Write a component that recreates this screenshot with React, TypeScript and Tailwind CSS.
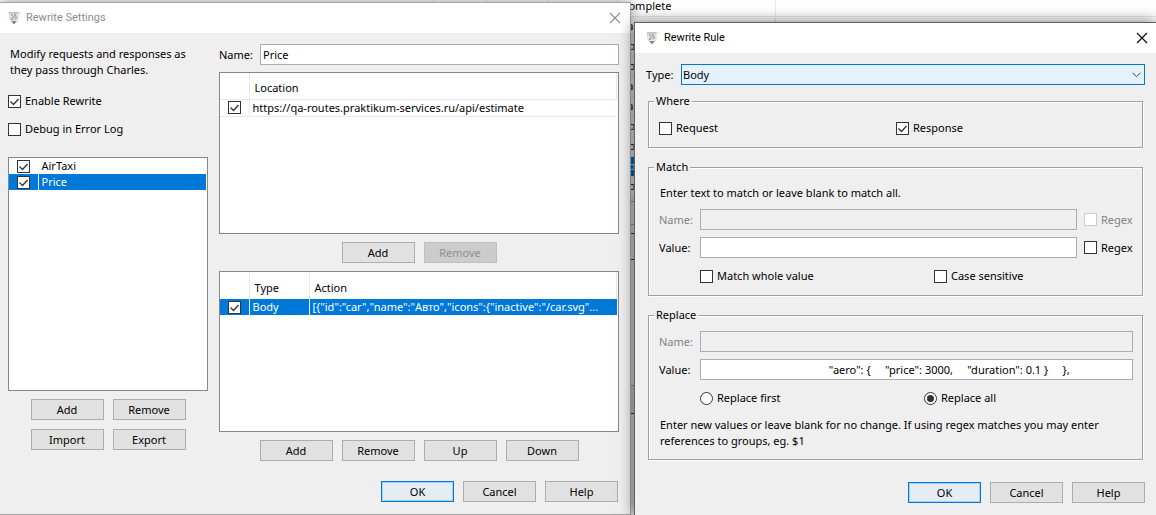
import React, { useId } from "react";

function Jug() {
  return (
    <svg width="14" height="14" viewBox="0 0 14 14" aria-hidden="true" className="shrink-0">
      <path d="M1.500 2h8.500v6.500L8.500 11h-5L2 8.500z" fill="#e6ece9" stroke="#c0c6c3" strokeWidth="0.700" />
      <path d="M0 2.500 1.500 1h9v1.200l-8.500.300z" fill="#bcc2bf" />
      <path d="M10 1.800c1.500-1.200 2.800-.3 2.900 1.700" fill="none" stroke="#d8d8d8" strokeWidth="0.800" />
      <rect x="3" y="3" width="2" height="2" fill="#7fd09a" />
      <rect x="6" y="3" width="2" height="2" fill="#ee7f98" />
      <rect x="4.500" y="5" width="2" height="2" fill="#86aef0" />
      <rect x="7" y="5.500" width="2" height="2" fill="#6cc67c" />
      <rect x="3" y="7" width="2" height="2" fill="#d884c4" />
      <rect x="6" y="7.500" width="1.500" height="1.500" fill="#e8b060" />
      <path d="M3.500 10h5l-1 1.800-1 1.200h-1l-1-1.200z" fill="#85898a" />
    </svg>
  );
}

function TitleBar({ title, active }: { title: string; active?: boolean }) {
  return (
    <header className={"flex h-[30px] items-center justify-between bg-white " + (active ? "pl-[11px] pr-2" : "pl-2 pr-[9px]")}>
      <div className="flex items-center">
        <Jug />
        <h1 className={"pl-1 font-[Roboto,sans-serif] " + (active ? "text-black" : "text-[#8c8c8c]")}>{title}</h1>
      </div>
      <button type="button" aria-label={"Close " + title} className={active ? "text-black" : "text-[#8c8c8c]"}>
        <svg width="12" height="12" viewBox="0 0 12 12" className="block">
          <path d="M1 1l10 10M11 1L1 11" fill="none" stroke="currentColor" strokeWidth="1.100" />
        </svg>
      </button>
    </header>
  );
}

type CheckProps = { label: string; checked?: boolean; disabled?: boolean; hideLabel?: boolean };

function Check({ label, checked, disabled, hideLabel }: CheckProps) {
  return (
    <label className={"flex items-center gap-1 " + (disabled ? "text-[#838383]" : "")}>
      <span className="grid size-[13px] shrink-0">
        <input
          type="checkbox"
          defaultChecked={checked}
          disabled={disabled}
          aria-label={hideLabel ? label : undefined}
          className="peer col-start-1 row-start-1 size-[13px] appearance-none border border-[#333] bg-white disabled:border-[#ccc]"
        />
        <svg viewBox="0 0 13 13" className="pointer-events-none col-start-1 row-start-1 hidden size-[13px] peer-checked:block">
          <path d="M2.500 6.500l3 3 5-5.500" fill="none" stroke="#333" strokeWidth="1.300" />
        </svg>
      </span>
      {!hideLabel && <span>{label}</span>}
    </label>
  );
}

function Radio({ label, checked }: { label: string; checked?: boolean }) {
  return (
    <label className="flex items-center gap-1">
      <span className="grid size-[13px] shrink-0 place-items-center">
        <input
          type="radio"
          name="replace-mode"
          defaultChecked={checked}
          className="peer col-start-1 row-start-1 size-[13px] appearance-none rounded-full border border-[#333] bg-white"
        />
        <span className="pointer-events-none col-start-1 row-start-1 hidden size-[7px] rounded-full bg-[#333] peer-checked:block" />
      </span>
      <span>{label}</span>
    </label>
  );
}

function Button({ children, primary, disabled }: { children: React.ReactNode; primary?: boolean; disabled?: boolean }) {
  const tone = primary
    ? "border-[#0078d7] bg-[#e5ecf4] shadow-[inset_0_0_0_1px_#a6d1f5]"
    : disabled
      ? "border-[#bfbfbf] bg-[#ccc] text-[#909090]"
      : "border-[#adadad] bg-[#e1e1e1]";
  return (
    <button type="button" disabled={disabled} className={"flex h-[21px] w-[73px] items-center justify-center border " + tone}>
      {children}
    </button>
  );
}

type FieldProps = { label: string; value?: string; disabled?: boolean; children?: React.ReactNode };

function Field({ label, value, disabled, children }: FieldProps) {
  const id = useId();
  return (
    <div className="flex items-center">
      <label htmlFor={id} className={"w-[41px] " + (disabled ? "text-[#838383]" : "")}>
        {label}
      </label>
      <input
        id={id}
        type="text"
        defaultValue={value}
        disabled={disabled}
        className="h-[21px] min-w-0 flex-1 border border-[#abadb3] bg-white px-0.5 disabled:bg-[#efefef]"
      />
      {children}
    </div>
  );
}

function Group({ title, className, children }: { title: string; className: string; children: React.ReactNode }) {
  return (
    <fieldset className={"ml-px mr-0.5 border border-[#a0a0a0] pl-[10px] pr-[9px] shadow-[1px_1px_0_#fff,inset_1px_1px_0_#fff] " + className}>
      <legend className="-ml-[5px] bg-[#efefef] px-0.5 leading-4">{title}</legend>
      {children}
    </fieldset>
  );
}

function RewriteSettings() {
  return (
    <section className="flex min-w-0 flex-1 flex-col border-y border-r border-[#a5a5a5] bg-[#efefef] shadow-[0_0_12px_rgba(0,0,0,0.45)]">
      <TitleBar title="Rewrite Settings" />
      <div className="flex gap-[11px] pl-2 pr-[11px] pt-[11px]">
        <div className="w-[200px] shrink-0">
          <p className="pl-0.5 pt-0.5">
            Modify requests and responses as
            <br />
            they pass through Charles.
          </p>
          <div className="mt-[15px] flex flex-col gap-3">
            <Check label="Enable Rewrite" checked />
            <Check label="Debug in Error Log" />
          </div>
          <div className="mt-5 h-[234px] border border-[#828790] bg-white pr-px">
            <table className="w-full table-fixed border-collapse">
              <colgroup>
                <col className="w-[29px]" />
                <col />
              </colgroup>
              <tbody>
                <tr>
                  <td className="h-4 border-r border-white pl-2">
                    <Check label="AirTaxi" checked hideLabel />
                  </td>
                  <td className="h-4 pl-[3px]">AirTaxi</td>
                </tr>
                <tr className="bg-[#0078d7] text-white">
                  <td className="h-4 border-r border-white pl-2">
                    <Check label="Price" checked hideLabel />
                  </td>
                  <td className="h-4 pl-[3px]">Price</td>
                </tr>
              </tbody>
            </table>
          </div>
          <div className="mt-2 grid grid-cols-[73px_73px] justify-center gap-[9px]">
            <Button>Add</Button>
            <Button>Remove</Button>
            <Button>Import</Button>
            <Button>Export</Button>
          </div>
        </div>
        <div className="min-w-0 flex-1">
          <Field label="Name:" value="Price" />
          <div className="mt-[7px] h-[162px] border border-[#828790] bg-white pr-px">
            <table className="w-full table-fixed border-collapse text-left">
              <colgroup>
                <col className="w-[29px]" />
                <col />
              </colgroup>
              <thead>
                <tr>
                  <th className="h-[26px] border-b border-r border-[#e8e8e8]" />
                  <th className="h-[26px] border-b border-r border-[#e8e8e8] pl-[5px] pt-1 font-normal">Location</th>
                </tr>
              </thead>
              <tbody>
                <tr>
                  <td className="h-4 border-b border-r border-[#e8e8e8] pl-2">
                    <Check label="Enable location" checked hideLabel />
                  </td>
                  <td className="h-4 border-b border-[#e8e8e8] pl-[3px]">https://qa-routes.praktikum-services.ru/api/estimate</td>
                </tr>
              </tbody>
            </table>
          </div>
          <div className="mt-2 flex justify-center gap-[9px]">
            <Button>Add</Button>
            <Button disabled>Remove</Button>
          </div>
          <div className="mt-2 h-[161px] border border-[#828790] bg-white pr-px">
            <table className="w-full table-fixed border-collapse text-left">
              <colgroup>
                <col className="w-[29px]" />
                <col className="w-[60px]" />
                <col />
              </colgroup>
              <thead>
                <tr>
                  <th className="h-[27px] border-r border-[#e8e8e8]" />
                  <th className="h-[27px] border-r border-[#e8e8e8] pl-[5px] pt-1 font-normal">Type</th>
                  <th className="h-[27px] border-r border-[#e8e8e8] pl-[5px] pt-1 font-normal">Action</th>
                </tr>
              </thead>
              <tbody>
                <tr className="bg-[#0078d7] text-white">
                  <td className="h-4 border-r border-white pl-2">
                    <Check label="Enable rule" checked hideLabel />
                  </td>
                  <td className="h-4 border-r border-white pl-[3px]">Body</td>
                  <td className="h-4 whitespace-nowrap pl-[3px]">{'[{"id":"car","name":"Авто","icons":{"inactive":"/car.svg"...'}</td>
                </tr>
              </tbody>
            </table>
          </div>
          <div className="mt-2 flex justify-center gap-[9px]">
            <Button>Add</Button>
            <Button>Remove</Button>
            <Button>Up</Button>
            <Button>Down</Button>
          </div>
        </div>
      </div>
      <div className="mt-5 flex justify-end gap-[9px] pb-3 pr-3">
        <Button primary>OK</Button>
        <Button>Cancel</Button>
        <Button>Help</Button>
      </div>
    </section>
  );
}

function RewriteRule() {
  return (
    <section className="min-w-0 flex-1 border-l border-t border-[#606060] bg-[#efefef] shadow-[0_0_14px_rgba(0,0,0,0.55)]">
      <TitleBar title="Rewrite Rule" active />
      <div className="pl-[11px] pr-[11px] pt-[11px]">
        <div className="flex items-center">
          <label htmlFor="rule-type" className="w-[35px]">
            Type:
          </label>
          <div className="grid min-w-0 flex-1 items-center">
            <select
              id="rule-type"
              defaultValue="Body"
              className="col-start-1 row-start-1 h-[21px] w-full appearance-none border border-[#0078d7] bg-[#e5f1fb] px-px"
            >
              <option>Body</option>
              <option>Add Header</option>
              <option>Modify Header</option>
            </select>
            <svg width="9" height="6" viewBox="0 0 9 6" className="pointer-events-none col-start-1 row-start-1 mr-1 justify-self-end">
              <path d="M.5.700l4 4 4-4" fill="none" stroke="#444" />
            </svg>
          </div>
        </div>
        <div className="pl-px">
          <Group title="Where" className="mt-2 h-[55px]">
            <div className="grid grid-cols-2 pt-[11px]">
              <Check label="Request" />
              <Check label="Response" checked />
            </div>
          </Group>
          <Group title="Match" className="mt-[11px] h-[137px]">
            <p className="pl-px pt-[10px]">Enter text to match or leave blank to match all.</p>
            <div className="mt-2 flex flex-col gap-[7px]">
              <Field label="Name:" disabled>
                <div className="w-[56px] pl-[7px]">
                  <Check label="Regex" disabled />
                </div>
              </Field>
              <Field label="Value:">
                <div className="w-[56px] pl-[7px]">
                  <Check label="Regex" />
                </div>
              </Field>
            </div>
            <div className="ml-[41px] mt-[10px] grid grid-cols-[234px_1fr]">
              <Check label="Match whole value" />
              <Check label="Case sensitive" />
            </div>
          </Group>
          <Group title="Replace" className="mt-[11px] h-[153px]">
            <div className="flex flex-col gap-[7px] pt-2">
              <Field label="Name:" disabled />
              <Field label="Value:" value={" ".repeat(44) + '"aero": {     "price": 3000,     "duration": 0.1 }     },'} />
            </div>
            <div className="ml-[41px] mt-[10px] grid grid-cols-[224px_1fr]">
              <Radio label="Replace first" />
              <Radio label="Replace all" checked />
            </div>
            <p className="mt-[11px] pl-px">
              Enter new values or leave blank for no change. If using regex matches you may enter references to groups, eg. $1
            </p>
          </Group>
        </div>
        <div className="mt-[22px] flex justify-end gap-[9px] pb-3">
          <Button primary>OK</Button>
          <Button>Cancel</Button>
          <Button>Help</Button>
        </div>
      </div>
    </section>
  );
}

const sessions = [
  { status: "Complete", time: "16:32:53", count: "6", size: "1.07 KB" },
  { status: "Failed" },
  { status: "Complete" },
  { status: "Complete" },
  { status: "Failed" },
  { status: "Failed" },
  { status: "Complete" },
  { status: "Complete" },
  { status: "Complete", selected: true },
  { status: "Complete" },
];

function SessionList() {
  return (
    <div className="absolute inset-0 flex flex-col overflow-hidden bg-[#efefef]">
      <table className="-mt-1 w-full table-fixed border-collapse bg-white">
        <colgroup>
          <col className="w-[433px]" />
          <col className="w-[53px]" />
          <col className="w-[62px]" />
          <col className="w-[69px]" />
          <col className="w-[158px]" />
          <col />
        </colgroup>
        <tbody>
          {sessions.map((row, i) => (
            <tr key={i} className={row.selected ? "bg-[#0078d7] text-white" : ""}>
              <td className="h-5 border-b border-r border-[#e8e8e8]" />
              <td className="h-5 border-b border-r border-[#e8e8e8] pr-1 text-right">{row.time}</td>
              <td className="h-5 border-b border-r border-[#e8e8e8] pr-5 text-right">{row.count}</td>
              <td className="h-5 border-b border-r border-[#e8e8e8] pr-1 text-right">{row.size}</td>
              <td className="h-5 border-b border-r border-[#e8e8e8] pl-1">{row.status}</td>
              <td className="h-5 border-b border-[#e8e8e8]" />
            </tr>
          ))}
        </tbody>
      </table>
      <div className="mt-1 h-6 border-y border-[#a0a0a0]" />
      <div className="mt-2 h-[27px] border-y border-[#333]" />
      <div className="h-[126px] border-b border-[#a0a0a0]" />
      <div className="h-7 border-b border-[#333] bg-[#e1e1e1]" />
      <div className="flex-1" />
    </div>
  );
}

export default function App() {
  return (
    <main className="relative min-h-screen overflow-hidden font-['Noto_Sans',sans-serif] text-[11px] leading-4 text-black">
      <SessionList />
      <div className="relative flex items-start gap-[3px]">
        <div className="flex min-w-0 flex-[631] pt-0.5">
          <RewriteSettings />
        </div>
        <div className="flex min-w-0 flex-[522] pt-[22px]">
          <RewriteRule />
        </div>
      </div>
    </main>
  );
}
